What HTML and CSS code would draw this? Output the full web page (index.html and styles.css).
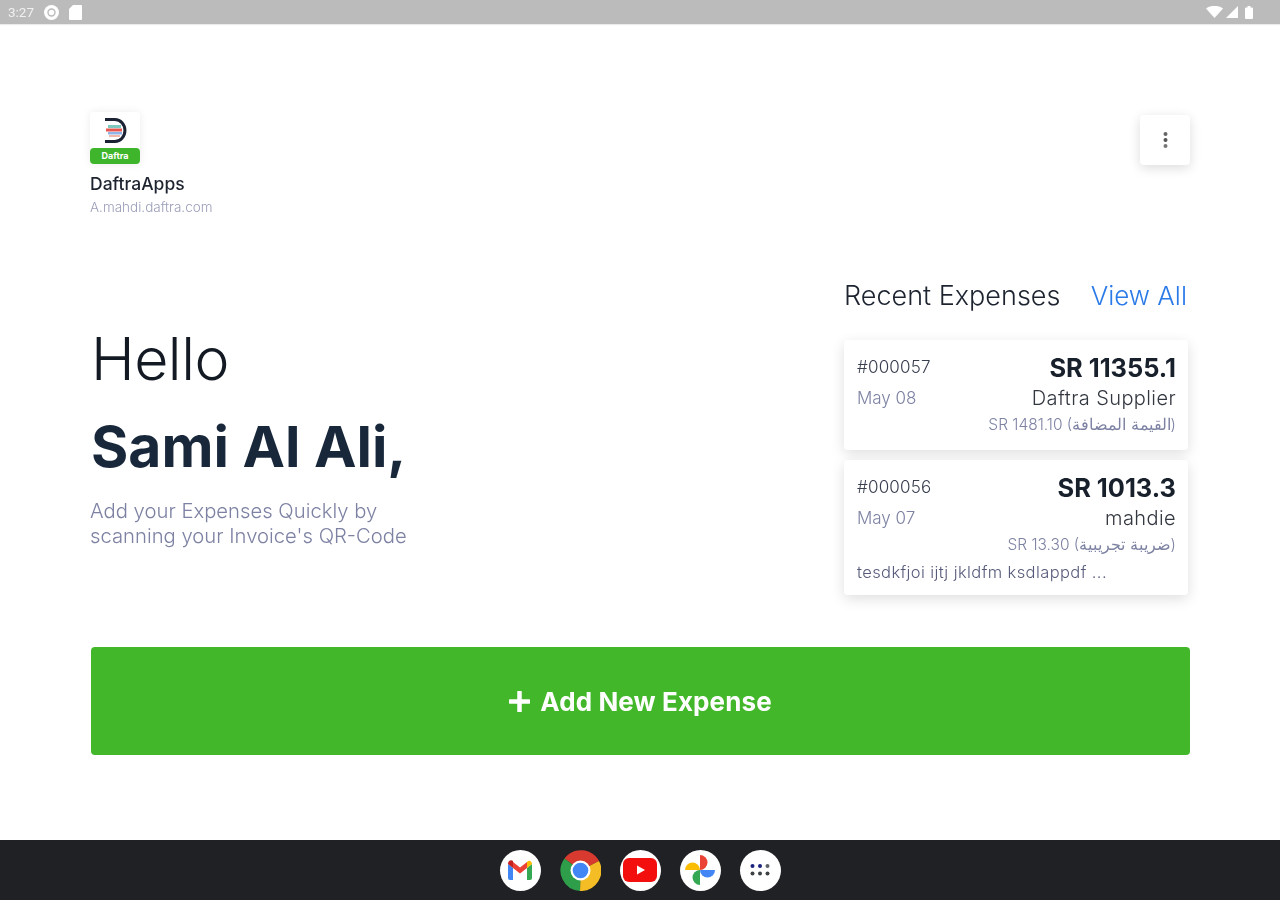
FILE: index.html
```html
<!DOCTYPE html>
<html lang="en">
<head>
<meta charset="utf-8">
<title>Daftra Expenses</title>
<link rel="stylesheet" href="styles.css">
</head>
<body>
<div class="screen">
  <header class="status">
    <div class="status-group">
      <span class="time">3:27</span>
      <svg class="si" width="15" height="15" viewBox="0 0 15 15"><circle cx="7.5" cy="7.5" r="7.500" fill="#fff"/><circle cx="7.5" cy="7.5" r="3.500" fill="none" stroke="#bbb" stroke-width="1.400"/></svg>
      <svg class="si" width="13" height="15" viewBox="0 0 13 15"><path d="M4 0h8a1 1 0 0 1 1 1v13a1 1 0 0 1-1 1H1a1 1 0 0 1-1-1V4z" fill="#fff"/></svg>
    </div>
    <div class="status-group status-right">
      <svg width="17" height="12" viewBox="0 0 17 12"><path d="M0 2.5C5-1 12-1 17 2.500L8.500 12z" fill="#fff"/></svg>
      <svg width="12" height="12" viewBox="0 0 12 12"><path d="M12 0v12H0z" fill="#fff"/></svg>
      <svg width="8" height="13" viewBox="0 0 8 13"><path d="M2.500 0h3v1.500H7a1 1 0 0 1 1 1V12a1 1 0 0 1-1 1H1a1 1 0 0 1-1-1V2.500a1 1 0 0 1 1-1h1.500z" fill="#fff"/></svg>
    </div>
  </header>

  <main class="main">
    <section class="top">
      <div class="account">
        <div class="logo">
          <svg class="logo-mark" width="24" height="28" viewBox="0 0 24 28">
            <path d="M2 2.500h10a9.500 10.500 0 0 1 0 22H2" fill="none" stroke="#1b2233" stroke-width="3"/>
            <rect x="5" y="8" width="13" height="3" fill="#7fc8c0"/>
            <rect x="3" y="11.500" width="16" height="3" fill="#e8574f"/>
            <rect x="5" y="15" width="14" height="2.500" fill="#8fb4e8"/>
            <rect x="6" y="18" width="11" height="2" fill="#f0b8a8"/>
          </svg>
          <span class="logo-tag">Daftra</span>
        </div>
        <div class="account-name">DaftraApps</div>
        <div class="account-mail">A.mahdi.daftra.com</div>
      </div>
      <button class="menu" aria-label="More">
        <svg width="5" height="16" viewBox="0 0 5 16"><circle cx="2.500" cy="2" r="2" fill="#666"/><circle cx="2.500" cy="8" r="2" fill="#555"/><circle cx="2.500" cy="14" r="2" fill="#777"/></svg>
      </button>
    </section>

    <section class="middle">
      <div class="greeting">
        <div class="hello">Hello</div>
        <div class="name">Sami Al Ali,</div>
        <p class="hint">Add your Expenses Quickly by<br>scanning your Invoice's QR-Code</p>
      </div>
      <div class="recent">
        <div class="recent-head">
          <span class="recent-title">Recent Expenses</span>
          <a class="view-all">View All</a>
        </div>
        <article class="card">
          <div class="row">
            <span class="code">#000057</span>
            <span class="amount">SR 11355.1</span>
          </div>
          <div class="row row-second">
            <span class="date">May 08</span>
            <span class="supplier">Daftra Supplier</span>
          </div>
          <div class="tax">SR 1481.10 (القيمة المضافة)</div>
        </article>
        <article class="card">
          <div class="row">
            <span class="code">#000056</span>
            <span class="amount">SR 1013.3</span>
          </div>
          <div class="row row-second">
            <span class="date">May 07</span>
            <span class="supplier">mahdie</span>
          </div>
          <div class="tax">SR 13.30 (ضريبة تجريبية)</div>
          <div class="note">tesdkfjoi ijtj jkldfm ksdlappdf ...</div>
        </article>
      </div>
    </section>

    <button class="add">
      <svg width="21" height="21" viewBox="0 0 21 21"><path d="M10.500 1v19M1 10.500h19" stroke="#fff" stroke-width="4.500" stroke-linecap="round"/></svg>
      <span>Add New Expense</span>
    </button>
  </main>

  <footer class="dock">
    <span class="dock-icon">
      <svg width="28" height="22" viewBox="0 0 28 22">
        <path d="M2 21V5l5 4v12H4a2 2 0 0 1-2-2z" fill="#4285f4"/>
        <path d="M21 21V9l5-4v14a2 2 0 0 1-2 2z" fill="#34a853"/>
        <path d="M7 9l7 5.500L21 9V3l-7 5.500L7 3z" fill="#ea4335"/>
        <path d="M2 5C2 2 5 0 7 2v7z" fill="#c5221f"/>
        <path d="M21 3c2-2.500 5-1 5 2l-5 4z" fill="#fbbc04"/>
      </svg>
    </span>
    <span class="dock-icon dock-chrome">
      <svg width="41" height="41" viewBox="0 0 41 41">
        <path d="M20.500 20.500L4.500 8.400A20.500 20.500 0 0 1 39 11z" fill="#d93a2f"/>
        <path d="M20.500 20.500L39 11A20.500 20.500 0 0 1 20 41z" fill="#f5bd25"/>
        <path d="M20.500 20.500L20 41A20.500 20.500 0 0 1 4.500 8.400z" fill="#2f9e4a"/>
        <circle cx="20.500" cy="20.500" r="10" fill="#fff"/>
        <circle cx="20.500" cy="20.500" r="7.800" fill="#4285f4"/>
      </svg>
    </span>
    <span class="dock-icon">
      <svg width="34" height="24" viewBox="0 0 34 24">
        <rect x="0" y="0" width="34" height="24" rx="6" fill="#f40f0f"/>
        <path d="M14 7.500l8 4.500-8 4.500z" fill="#fff"/>
      </svg>
    </span>
    <span class="dock-icon">
      <svg width="32" height="32" viewBox="0 0 32 32">
        <path d="M16 16V1a7.500 7.500 0 0 1 0 15z" fill="#ea4335"/>
        <path d="M16 16h15a7.500 7.500 0 0 1-15 0z" fill="#4285f4"/>
        <path d="M16 16v15a7.500 7.500 0 0 1 0-15z" fill="#34a853"/>
        <path d="M16 16H1a7.500 7.500 0 0 1 15 0z" fill="#fbbc04"/>
      </svg>
    </span>
    <span class="dock-icon">
      <svg width="20" height="14" viewBox="0 0 20 14">
        <g fill="#1a237e"><circle cx="2.500" cy="3" r="2"/><circle cx="10" cy="3" r="2"/></g>
        <circle cx="17.500" cy="3" r="2" fill="#5f6368"/>
        <g fill="#3c4043"><circle cx="2.500" cy="10.500" r="2"/><circle cx="10" cy="10.500" r="2"/><circle cx="17.500" cy="10.500" r="2"/></g>
      </svg>
    </span>
  </footer>
</div>
</body>
</html>
```

FILE: styles.css
```css
* { box-sizing: border-box; }

html, body {
  margin: 0;
  height: 100%;
}

body {
  background: #fff;
  font-family: Inter, "Noto Sans", "Liberation Sans", sans-serif;
  color: #18273a;
}

.screen {
  width: 1280px;
  height: 900px;
  display: flex;
  flex-direction: column;
  overflow: hidden;
  filter: blur(0.45px);
}

.status {
  height: 24px;
  flex: none;
  background: #bbbbbb;
  box-shadow: 0 1px 1px rgba(0, 0, 0, 0.08);
  display: flex;
  align-items: center;
  justify-content: space-between;
  padding: 0 27px 0 8px;
  color: #f0f0f0;
}

.status-group {
  display: flex;
  align-items: center;
  gap: 10px;
}

.status-right { gap: 3px; }

.status-right svg:last-child { margin-left: 4px; }

.time {
  font-size: 13.500px;
  font-family: Roboto, sans-serif;
}

.main {
  flex: 1;
  display: flex;
  flex-direction: column;
  padding: 88px 90px 85px 90px;
}

.top {
  display: flex;
  justify-content: space-between;
  align-items: flex-start;
  height: 165px;
}

.logo {
  width: 50px;
  height: 52px;
  position: relative;
  display: flex;
  justify-content: center;
  padding-top: 5px;
  background: #fff;
  box-shadow: 0 0 8px rgba(0, 0, 0, 0.08);
  border-radius: 4px;
}

.logo-tag {
  position: absolute;
  left: 0;
  right: 0;
  bottom: 0;
  height: 16px;
  background: #3eb52a;
  border-radius: 4px;
  color: #fff;
  font-size: 9px;
  font-weight: 700;
  line-height: 16px;
  text-align: center;
}

.account-name {
  margin-top: 10px;
  font-size: 17.500px;
  line-height: 20px;
  font-weight: 500;
  color: #1d2430;
}

.account-mail {
  margin-top: 6px;
  font-size: 13.500px;
  line-height: 15px;
  font-weight: 300;
  color: #9a9eb8;
}

.menu {
  margin-top: 3px;
  width: 50px;
  height: 50px;
  border: 0;
  border-radius: 4px;
  background: #fff;
  box-shadow: 0 3px 12px rgba(0, 0, 0, 0.14);
  display: flex;
  align-items: center;
  justify-content: center;
  padding: 0;
}

.middle {
  display: flex;
  justify-content: space-between;
  align-items: flex-start;
}

.greeting { padding-top: 47px; padding-left: 1px; }

.hello {
  font-size: 59px;
  line-height: 70px;
  font-weight: 300;
  color: #141a24;
  letter-spacing: -0.5px;
}

.name {
  margin-top: 19px;
  font-size: 57px;
  line-height: 68px;
  font-weight: 700;
  color: #18273a;
}

.hint {
  margin: 17px 0 0 -1px;
  font-size: 20.250px;
  line-height: 25px;
  font-weight: 300;
  color: #7d82a3;
}

.recent {
  width: 344px;
  margin-right: 2px;
  display: flex;
  flex-direction: column;
  gap: 10px;
}

.recent-head {
  display: flex;
  justify-content: space-between;
  align-items: center;
  height: 36px;
  margin-bottom: 17px;
}

.recent-title {
  font-size: 27px;
  font-weight: 300;
  color: #1d2430;
}

.view-all {
  font-size: 26px;
  font-weight: 300;
  color: #2a7ae8;
  margin-right: 1px;
}

.card {
  background: #fff;
  border-radius: 4px;
  box-shadow: 0 4px 14px rgba(0, 0, 0, 0.13);
  padding: 9px 12px 10px 13px;
}

.row {
  display: flex;
  justify-content: space-between;
  align-items: center;
  height: 36px;
}

.row-second { height: 26px; }

.code {
  font-size: 17px;
  font-weight: 300;
  color: #3a3f50;
  letter-spacing: 0.2px;
}

.amount {
  font-size: 25.400px;
  font-weight: 700;
  color: #18202c;
}

.date {
  font-size: 17px;
  font-weight: 300;
  color: #7d82a3;
}

.supplier {
  font-size: 20px;
  font-weight: 300;
  color: #333740;
  letter-spacing: 0.4px;
}

.tax {
  margin: 2px 0 3px;
  font-size: 15.500px;
  line-height: 24px;
  font-weight: 300;
  text-align: right;
  color: #7d82a3;
}

.note {
  margin: 1px 0;
  font-size: 16.500px;
  line-height: 24px;
  font-weight: 300;
  color: #565a7a;
  letter-spacing: 0.4px;
}

.add {
  margin-top: auto;
  margin-left: 1px;
  height: 108px;
  flex: none;
  border: 0;
  border-radius: 4px;
  background: #43b72a;
  color: #fff;
  font-family: inherit;
  font-size: 26px;
  font-weight: 700;
  letter-spacing: 0.1px;
  display: flex;
  align-items: center;
  justify-content: center;
  gap: 10px;
}

.dock {
  height: 60px;
  flex: none;
  background: #202125;
  display: flex;
  align-items: center;
  justify-content: center;
  gap: 19px;
}

.dock-icon {
  width: 41px;
  height: 41px;
  border-radius: 50%;
  background: #fff;
  display: flex;
  align-items: center;
  justify-content: center;
}

.dock-chrome { background: transparent; }
```
